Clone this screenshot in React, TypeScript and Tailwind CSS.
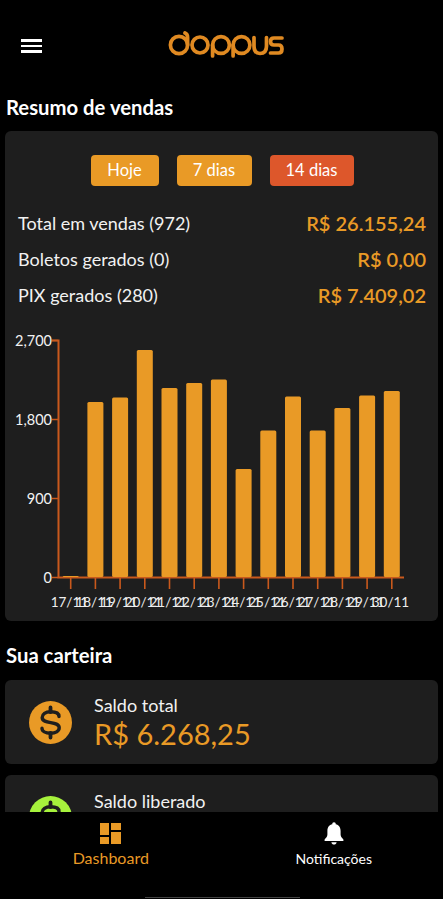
const ORANGE = "#e99a26";
const AXIS = "#c9591c";

const bars = [576, 402, 397.5, 350, 388, 383, 379.5, 469, 430.5, 396.5, 430.5, 408, 395.5, 391];
const dates = ["17/11", "18/11", "19/11", "20/11", "21/11", "22/11", "23/11", "24/11", "25/11", "26/11", "27/11", "28/11", "29/11", "30/11"];
const yTicks = [
  { label: "2,700", y: 340.5 },
  { label: "1,800", y: 419.5 },
  { label: "900", y: 498.5 },
  { label: "0", y: 577.5 },
];

// chart svg uses page coordinates, it sits at x=5, y=331
const OX = 5;
const OY = 331;

function SalesChart() {
  return (
    <svg width="434" height="285" viewBox={`${OX} ${OY} 434 285`} className="block" style={{ fontFamily: "Lato, sans-serif" }}>
      <path d={`M52 340.5H58.5V577.5H404`} fill="none" stroke={AXIS} strokeWidth="2" />
      {yTicks.map((t) => (
        <g key={t.label}>
          <line x1="52" x2="58" y1={t.y} y2={t.y} stroke={AXIS} strokeWidth="1.5" />
          <text x="52" y={t.y + 5} textAnchor="end" fontSize="14.5" fill="#f2f2f2">
            {t.label}
          </text>
        </g>
      ))}
      {bars.map((top, i) => {
        const cx = 70.7 + i * 24.7;
        return (
          <g key={i}>
            <rect x={cx - 8} y={top} width="16" height={577 - top} rx="1.5" fill={ORANGE} />
            <line x1={cx} x2={cx} y1="578" y2="589" stroke={AXIS} strokeWidth="1.6" />
            <text x={cx - 1.3} y="607" textAnchor="middle" fontSize="13.5" fill="#eeeeee">
              {dates[i]}
            </text>
          </g>
        );
      })}
    </svg>
  );
}

function Logo() {
  return (
    <svg width="116" height="28" viewBox="0 0 116 28" fill="none" stroke="#e08a22" strokeWidth="3.7" strokeLinecap="round">
      <circle cx="11" cy="14" r="8.6" />
      <path d="M19.6 14V6.5Q19.6 3 17 2" />
      <circle cx="32" cy="14" r="8" />
      <circle cx="53" cy="14" r="8.4" />
      <path d="M44.6 14V25" />
      <circle cx="73.5" cy="14" r="8.4" />
      <path d="M65.1 14V25" />
      <path d="M86 6.5V15Q86 22.5 92 22.5Q98.5 22.5 98.5 15V6.5" />
      <path d="M114 7H106Q102.5 7 102.5 10.5Q102.5 14 106 14H110.5Q114 14 114 18Q114 22 110.5 22H102.5" />
    </svg>
  );
}

function DollarCircle({ color }: { color: string }) {
  return (
    <svg width="43" height="43" viewBox="0 0 43 43" className="shrink-0">
      <circle cx="21.5" cy="21.5" r="21.5" fill={color} />
      <path
        d="M30 15.5C30 12.5 26.5 10.8 21.5 10.8C16.5 10.8 13.2 13 13.2 16.4C13.2 24 30.2 19.2 30.2 26.8C30.2 30.2 26.5 32.2 21.5 32.2C16.5 32.2 13 30.2 13 27.2"
        fill="none"
        stroke="#1e1e1e"
        strokeWidth="3.4"
        strokeLinecap="round"
      />
      <path d="M21.5 6.5V11M21.5 32V36.5" stroke="#1e1e1e" strokeWidth="3.8" strokeLinecap="round" />
    </svg>
  );
}

function DashboardIcon() {
  return (
    <svg width="21" height="21" viewBox="0 0 21 21" fill={ORANGE}>
      <rect x="0" y="0" width="9" height="12" />
      <rect x="11" y="0" width="10" height="7" />
      <rect x="0" y="14" width="9" height="7" />
      <rect x="11" y="9" width="10" height="12" />
    </svg>
  );
}

function BellIcon() {
  return (
    <svg width="20" height="23" viewBox="0 0 20 23" fill="#ffffff">
      <circle cx="10" cy="2" r="1.8" />
      <path d="M10 2C5.5 2 3.4 5.2 3.4 9V12.5C3.4 14.6 2 16 0.6 17.4V19H19.4V17.4C18 16 16.6 14.6 16.6 12.5V9C16.6 5.2 14.5 2 10 2Z" />
      <path d="M7.4 20.2H12.6C12.4 21.7 11.3 22.6 10 22.6C8.7 22.6 7.6 21.7 7.4 20.2Z" />
    </svg>
  );
}

function Row({ label, value }: { label: string; value: string }) {
  return (
    <div className="flex items-center justify-between h-9">
      <span className="text-[18px] text-[#f2f2f2]">{label}</span>
      <span className="text-[20px] font-semibold text-[#e99a26]">{value}</span>
    </div>
  );
}

function WalletCard({ title, value, color }: { title: string; value?: string; color: string }) {
  return (
    <div className="h-[84px] rounded-md bg-[#1e1e1e] flex items-center pl-6 gap-[22px] mb-[11px]">
      <DollarCircle color={color} />
      <div className="flex flex-col pt-[2px] min-h-[58px]">
        <span className="text-[18px] leading-[22px] text-[#f2f2f2]">{title}</span>
        {value && <span className="text-[29px] leading-[36px] text-[#e99a26]">{value}</span>}
      </div>
    </div>
  );
}

export default function App() {
  return (
    <div className="w-[443px] h-[899px] bg-black flex flex-col overflow-hidden font-['Lato',sans-serif]">
      <div className="flex-1 min-h-0 overflow-hidden px-[5px]">
        <div className="relative h-[90px] flex items-center justify-center">
          <div className="absolute left-4 top-[39px] w-[21px] flex flex-col gap-[3px]">
            <div className="h-[2.5px] bg-white" />
            <div className="h-[2.5px] bg-white" />
            <div className="h-[2.5px] bg-white" />
          </div>
          <div className="ml-2">
            <Logo />
          </div>
        </div>

        <h2 className="text-[20.3px] leading-[26px] font-bold text-white pl-px mb-[11px] mt-[4px]">Resumo de vendas</h2>

        <div className="h-[490px] rounded-md bg-[#1e1e1e] overflow-hidden">
          <div className="flex justify-center gap-[18px] pt-6 pl-[1px]">
            <button className="w-[68px] h-[31px] rounded bg-[#e99a26] text-white text-[16.5px]">Hoje</button>
            <button className="w-[75px] h-[31px] rounded bg-[#e99a26] text-white text-[16.5px]">7 dias</button>
            <button className="w-[84px] h-[31px] rounded bg-[#dd572b] text-white text-[16.5px]">14 dias</button>
          </div>
          <div className="pl-[13px] pr-3 mt-[19px]">
            <Row label="Total em vendas (972)" value="R$ 26.155,24" />
            <Row label="Boletos gerados (0)" value="R$ 0,00" />
            <Row label="PIX gerados (280)" value="R$ 7.409,02" />
          </div>
          <div className="mt-[18px]">
            <SalesChart />
          </div>
        </div>

        <h2 className="text-[20.3px] leading-[26px] font-bold text-white pl-px mt-[21px] mb-[12px]">Sua carteira</h2>

        <WalletCard title="Saldo total" value="R$ 6.268,25" color="#e99a26" />
        <WalletCard title="Saldo liberado" color="#a6f23c" />
      </div>

      <div className="relative h-[87px] shrink-0 bg-black grid grid-cols-2">
        <div className="flex flex-col items-center pt-[11px]">
          <DashboardIcon />
          <span className="mt-[4px] text-[16px] leading-5 text-[#e99a26]">Dashboard</span>
        </div>
        <div className="flex flex-col items-center pt-[10px] pl-[3px]">
          <BellIcon />
          <span className="mt-[4px] text-[14px] leading-5 text-white">Notificações</span>
        </div>
        <div className="absolute left-[145px] bottom-[1px] w-[155px] h-px bg-[#444444]" />
      </div>
    </div>
  );
}
